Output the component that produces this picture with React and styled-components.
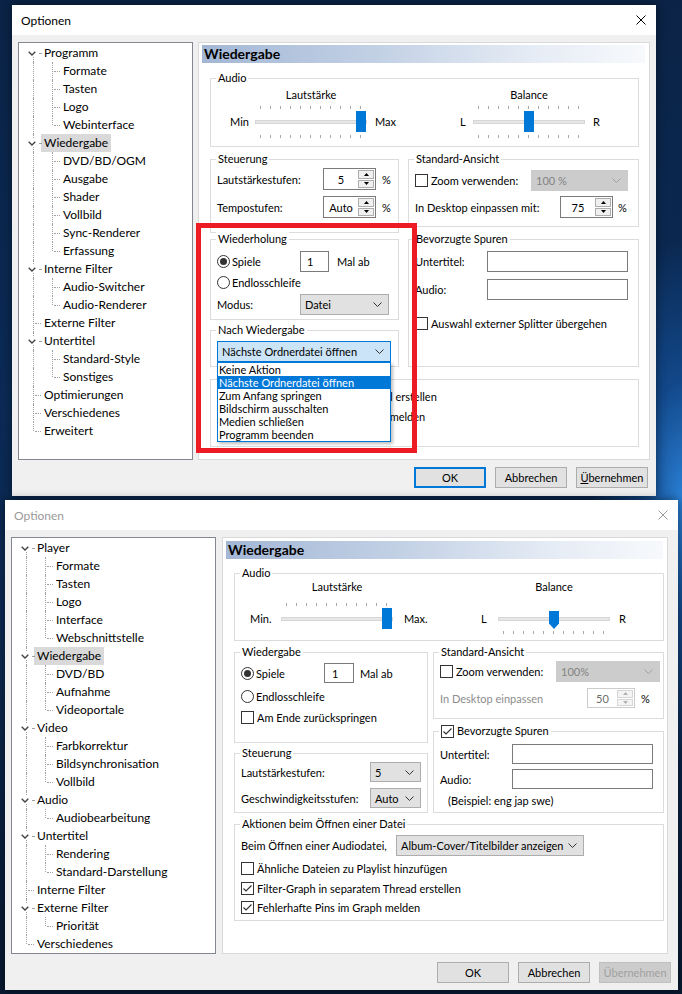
import React from 'react'
import styled, { createGlobalStyle } from 'styled-components'

const GlobalStyle = createGlobalStyle`
  html, body {
    margin: 0;
    padding: 0;
  }
  body {
    width: 682px;
    height: 994px;
    overflow: hidden;
    background:
      radial-gradient(ellipse 90px 260px at 100% 50%, #2a7fd4 0%, rgba(24, 96, 180, 0.55) 45%, rgba(0, 0, 0, 0) 100%),
      linear-gradient(180deg, #0b2346 0%, #0a2a55 40%, #0b2850 65%, #08182f 100%);
    font-family: Lato, "Noto Sans", sans-serif;
    font-size: 11px;
    color: #000;
  }
`

const Screen = styled.div`
  display: flex;
  flex-direction: column;
  padding-top: 5px;
`

const Dialog = styled.div`
  position: relative;
  flex: none;
  width: ${p => p.$w}px;
  height: ${p => p.$h}px;
  margin: ${p => p.$mt}px 0 0 ${p => p.$ml}px;
  background: #f0f0f0;
  display: flex;
  flex-direction: column;
  box-shadow: 0 0 9px rgba(0, 0, 0, 0.45);
`

const TitleBar = styled.div`
  flex: none;
  height: 30px;
  background: #fff;
  display: flex;
  align-items: center;
  justify-content: space-between;
  padding: 0 10px 0 9px;
  font-size: 12px;
  color: ${p => (p.$inactive ? '#9a9a9a' : '#000')};
`

const Main = styled.div`
  flex: none;
  display: flex;
  gap: ${p => p.$gap}px;
  height: ${p => p.$h}px;
  margin-top: 7px;
  padding: 0 ${p => p.$pr}px 0 6px;
`

const ButtonRow = styled.div`
  display: flex;
  justify-content: flex-end;
  gap: 9px;
  margin-top: ${p => p.$mt}px;
  padding-right: ${p => p.$pr}px;
`

const Button = styled.div`
  width: 72px;
  height: 21px;
  box-sizing: border-box;
  display: flex;
  align-items: center;
  justify-content: center;
  background: ${p => (p.$disabled ? '#cccccc' : '#e1e1e1')};
  border: ${p => (p.$default ? '2px solid #0078d7' : p.$disabled ? '1px solid #bfbfbf' : '1px solid #adadad')};
  color: ${p => (p.$disabled ? '#a0a0a0' : '#000')};
`

/* ---------- tree ---------- */

const TreeBox = styled.div`
  flex: none;
  width: ${p => p.$w}px;
  box-sizing: border-box;
  background: #fff;
  border: 1px solid #828790;
  padding: 1px 0 0 ${p => p.$pl}px;
  font-size: 12px;
`

const TreeRow = styled.div`
  display: flex;
  align-items: center;
  height: 18px;
`

const Guide = styled.span`
  position: relative;
  flex: none;
  width: 19px;
  height: 18px;
  &::before {
    content: '';
    display: ${p => (p.$up || p.$down ? 'block' : 'none')};
    position: absolute;
    left: 11px;
    top: ${p => (p.$up ? '0' : '9px')};
    bottom: ${p => (p.$down ? '0' : '9px')};
    border-left: 1px dotted #a0a0a0;
  }
  &::after {
    content: '';
    display: ${p => (p.$h ? 'block' : 'none')};
    position: absolute;
    left: ${p => (p.$exp ? 17 : 13)}px;
    right: 0;
    top: 9px;
    border-top: 1px dotted #a0a0a0;
  }
`

const Expander = styled.span`
  position: absolute;
  left: 5px;
  top: 5px;
  width: 9px;
  height: 8px;
  background: #fff;
  display: flex;
  align-items: center;
  justify-content: center;
  z-index: 1;
`

const NodeLabel = styled.span`
  height: 18px;
  line-height: 18px;
  padding: 0 3px;
  white-space: nowrap;
  background: ${p => (p.$sel ? '#d9d9d9' : 'transparent')};
`

/* ---------- page ---------- */

const Panel = styled.div`
  flex: none;
  width: ${p => p.$w}px;
  box-sizing: border-box;
  background: #fff;
  border: 1px solid #d9d9d9;
  padding: ${p => p.$pt}px 4px 0 3px;
`

const PageHeader = styled.div`
  height: 18px;
  line-height: 18px;
  padding-left: 2px;
  font-size: 14px;
  font-weight: 700;
  background: linear-gradient(to right, #a3b7d5 0%, #c3d1e5 40%, #e6ecf5 75%, #f7f9fc 100%);
`

const PageBody = styled.div`
  display: flex;
  flex-direction: column;
  width: ${p => p.$w}px;
  margin: ${p => p.$mt}px 0 0 ${p => p.$ml}px;
`

const Columns = styled.div`
  display: flex;
  align-items: flex-start;
  gap: ${p => p.$gap}px;
  margin-top: ${p => p.$mt}px;
`

const Column = styled.div`
  flex: none;
  width: ${p => p.$w}px;
  display: flex;
  flex-direction: column;
`

const Group = styled.div`
  flex: none;
  box-sizing: border-box;
  height: ${p => p.$h}px;
  margin-top: ${p => p.$mt || 0}px;
  border: 1px solid #dcdcdc;
  padding: 0 6px;
  display: flex;
  flex-direction: column;
`

const Legend = styled.div`
  align-self: flex-start;
  height: 14px;
  line-height: 14px;
  margin: -8px 0 0 -1px;
  padding: 0 2px;
  background: #fff;
  display: flex;
  align-items: center;
  gap: 3px;
  white-space: nowrap;
`

const Row = styled.div`
  flex: none;
  display: flex;
  align-items: center;
  height: ${p => p.$h}px;
  margin-top: ${p => p.$mt || 0}px;
  white-space: nowrap;
`

const Label = styled.span`
  flex: none;
  width: ${p => (p.$w ? `${p.$w}px` : 'auto')};
  margin-left: ${p => p.$ml || 0}px;
  color: ${p => (p.$disabled ? '#8d8d8d' : 'inherit')};
`

const Box = styled.span`
  flex: none;
  width: 13px;
  height: 13px;
  box-sizing: border-box;
  border: 1px solid #333;
  border-radius: ${p => (p.$round ? '50%' : '0')};
  background: #fff;
  display: flex;
  align-items: center;
  justify-content: center;
`

const Dot = styled.span`
  width: 7px;
  height: 7px;
  border-radius: 50%;
  background: #333;
`

const Choice = styled.span`
  flex: none;
  display: flex;
  align-items: center;
  gap: ${p => p.$gap ?? 3}px;
  width: ${p => (p.$w ? `${p.$w}px` : 'auto')};
`

const TextBox = styled.span`
  flex: none;
  box-sizing: border-box;
  width: ${p => p.$w}px;
  height: ${p => p.$h}px;
  border: 1px solid #7a7a7a;
  background: #fff;
  padding-left: ${p => p.$pl || 0}px;
  display: flex;
  align-items: center;
`

const comboLook = {
  normal: { bg: '#e1e1e1', border: '#adadad', color: '#000' },
  disabled: { bg: '#cccccc', border: '#cccccc', color: '#838383' },
  focus: { bg: '#cce4f7', border: '#0078d7', color: '#000' },
}

const ComboBox = styled.span`
  flex: none;
  box-sizing: border-box;
  width: ${p => p.$w}px;
  height: ${p => p.$h}px;
  padding: 0 6px 0 4px;
  display: flex;
  align-items: center;
  justify-content: space-between;
  background: ${p => comboLook[p.$look].bg};
  border: 1px solid ${p => comboLook[p.$look].border};
  color: ${p => comboLook[p.$look].color};
`

const ComboWrap = styled.div`
  position: relative;
  flex: none;
`

const DropList = styled.div`
  position: absolute;
  top: 100%;
  left: 0;
  width: 100%;
  box-sizing: border-box;
  background: #fff;
  border: 1px solid #0078d7;
  box-shadow: 2px 2px 3px rgba(0, 0, 0, 0.25);
  z-index: 5;
`

const DropItem = styled.div`
  height: 13px;
  line-height: 13px;
  padding-left: 1px;
  white-space: nowrap;
  background: ${p => (p.$sel ? '#0078d7' : 'transparent')};
  color: ${p => (p.$sel ? '#fff' : '#000')};
`

const SpinBox = styled.span`
  flex: none;
  box-sizing: border-box;
  width: ${p => p.$w}px;
  height: ${p => p.$h}px;
  display: flex;
  background: #fff;
  border: 1px solid ${p => (p.$disabled ? '#cccccc' : '#7a7a7a')};
  color: ${p => (p.$disabled ? '#6d6d6d' : '#000')};
`

const SpinValue = styled.span`
  flex: 1;
  display: flex;
  align-items: center;
  justify-content: center;
`

const SpinArrows = styled.span`
  flex: none;
  width: 16px;
  display: flex;
  flex-direction: column;
  gap: 1px;
  padding: 1px 1px 1px 0;
`

const SpinArrow = styled.span`
  flex: 1;
  display: flex;
  align-items: center;
  justify-content: center;
  box-sizing: border-box;
  background: ${p => (p.$disabled ? '#f4f4f4' : '#f0f0f0')};
  border: 1px solid ${p => (p.$disabled ? '#d6d6d6' : '#adadad')};
`

const Overlay = styled.div`
  position: absolute;
  left: ${p => p.$x}px;
  top: ${p => p.$y}px;
  width: ${p => p.$w}px;
  height: ${p => p.$h}px;
  box-sizing: border-box;
  border: 5px solid #ed1c24;
  z-index: 10;
  pointer-events: none;
`

/* ---------- slider ---------- */

const SliderRow = styled.div`
  display: flex;
  margin: ${p => p.$mt}px 0 0 ${p => p.$ml}px;
`

const SliderCol = styled.div`
  flex: none;
  display: flex;
  flex-direction: column;
`

const SliderCaption = styled.div`
  width: 112px;
  height: 14px;
  line-height: 14px;
  text-align: center;
  margin-left: ${p => p.$lead}px;
`

const TickRow = styled.div`
  display: flex;
  justify-content: space-between;
  width: 101px;
  height: 4px;
  margin: ${p => p.$mt}px 0 0 ${p => p.$lead + 5}px;
  visibility: ${p => (p.$hidden ? 'hidden' : 'visible')};
`

const Tick = styled.span`
  width: 1px;
  height: 3px;
  background: #a8a8a8;
`

const SliderLine = styled.div`
  display: flex;
  align-items: center;
  height: 21px;
  margin-top: ${p => p.$mt}px;
`

const EndLabel = styled.span`
  flex: none;
  box-sizing: border-box;
  width: ${p => (p.$w ? `${p.$w}px` : 'auto')};
  padding-left: ${p => p.$pl || 0}px;
`

const Track = styled.div`
  position: relative;
  flex: none;
  width: 112px;
  height: 21px;
  display: flex;
  align-items: center;
`

const Rail = styled.div`
  width: 100%;
  height: 4px;
  box-sizing: border-box;
  background: #e7e7e7;
  border: 1px solid #d6d6d6;
`

const Thumb = styled.div`
  position: absolute;
  top: ${p => (p.$pointed ? 3 : 0)}px;
  width: 10px;
  height: ${p => (p.$pointed ? 18 : 21)}px;
  background: #0078d7;
  clip-path: ${p => (p.$pointed ? 'polygon(0 0, 100% 0, 100% 70%, 50% 100%, 0 70%)' : 'none')};
`

/* ---------- small drawings ---------- */

const CloseIcon = ({ color }) => (
  <svg width="10" height="10" viewBox="0 0 10 10">
    <path d="M0.5 0.5 L9.5 9.5 M9.5 0.5 L0.5 9.5" stroke={color} strokeWidth="1" fill="none" />
  </svg>
)

const Chevron = ({ color = '#333', w = 9 }) => (
  <svg width={w} height="5" viewBox="0 0 9 5">
    <polyline points="0.5,0.5 4.5,4.5 8.5,0.5" stroke={color} strokeWidth="1" fill="none" />
  </svg>
)

const TreeChevron = () => (
  <svg width="8" height="5" viewBox="0 0 8 5">
    <polyline points="0.7,0.7 4,4 7.3,0.7" stroke="#404040" strokeWidth="1.3" fill="none" />
  </svg>
)

const Tri = ({ up, color }) => (
  <svg width="5" height="3" viewBox="0 0 5 3">
    <polygon points={up ? '0,3 5,3 2.5,0' : '0,0 5,0 2.5,3'} fill={color} />
  </svg>
)

const CheckMark = () => (
  <svg width="11" height="11" viewBox="0 0 11 11">
    <polyline points="1.5,5.5 4,8 9.5,2.5" stroke="#333" strokeWidth="1.2" fill="none" />
  </svg>
)

const CheckBox = ({ checked }) => <Box>{checked && <CheckMark />}</Box>
const Radio = ({ checked }) => <Box $round>{checked && <Dot />}</Box>

const Combo = ({ w, h = 21, look = 'normal', children }) => (
  <ComboBox $w={w} $h={h} $look={look}>
    <span>{children}</span>
    <Chevron color={look === 'disabled' ? '#a0a0a0' : '#333'} />
  </ComboBox>
)

const Spin = ({ w, h, value, disabled }) => (
  <SpinBox $w={w} $h={h} $disabled={disabled}>
    <SpinValue>{value}</SpinValue>
    <SpinArrows>
      <SpinArrow $disabled={disabled}><Tri up color={disabled ? '#b0b0b0' : '#000'} /></SpinArrow>
      <SpinArrow $disabled={disabled}><Tri color={disabled ? '#b0b0b0' : '#000'} /></SpinArrow>
    </SpinArrows>
  </SpinBox>
)

const Slider = ({ caption, min, max, lead, tail, tailPad, value, top, bottom, pointed, s }) => (
  <SliderCol>
    <SliderCaption $lead={lead} style={{ marginTop: s.cap }}>{caption}</SliderCaption>
    <TickRow $lead={lead} $mt={s.t1} $hidden={!top}>
      {Array.from({ length: 11 }, (_, i) => <Tick key={i} />)}
    </TickRow>
    <SliderLine $mt={s.sl}>
      <EndLabel $w={lead}>{min}</EndLabel>
      <Track>
        <Rail />
        <Thumb $pointed={pointed} style={{ left: Math.round(value * 100) + 1 }} />
      </Track>
      <EndLabel $w={tail} $pl={tailPad}>{max}</EndLabel>
    </SliderLine>
    <TickRow $lead={lead} $mt={s.t2} $hidden={!bottom}>
      {Array.from({ length: 11 }, (_, i) => <Tick key={i} />)}
    </TickRow>
  </SliderCol>
)

/* ---------- tree data ---------- */

const flattenTree = nodes => {
  const rows = []
  nodes.forEach((n, i) => {
    const first = i === 0
    const last = i === nodes.length - 1
    rows.push({
      key: n.label,
      label: n.label,
      sel: n.sel,
      guides: [{ up: !first, down: !last, h: true, exp: !!n.children }],
    })
    ;(n.children || []).forEach((c, j) => {
      const lastChild = j === n.children.length - 1
      rows.push({
        key: `${n.label}/${c}`,
        label: c,
        guides: [{ up: !last, down: !last }, { up: true, down: !lastChild, h: true }],
      })
    })
  })
  return rows
}

const topTree = flattenTree([
  { label: 'Programm', children: ['Formate', 'Tasten', 'Logo', 'Webinterface'] },
  { label: 'Wiedergabe', sel: true, children: ['DVD/BD/OGM', 'Ausgabe', 'Shader', 'Vollbild', 'Sync-Renderer', 'Erfassung'] },
  { label: 'Interne Filter', children: ['Audio-Switcher', 'Audio-Renderer'] },
  { label: 'Externe Filter' },
  { label: 'Untertitel', children: ['Standard-Style', 'Sonstiges'] },
  { label: 'Optimierungen' },
  { label: 'Verschiedenes' },
  { label: 'Erweitert' },
])

const bottomTree = flattenTree([
  { label: 'Player', children: ['Formate', 'Tasten', 'Logo', 'Interface', 'Webschnittstelle'] },
  { label: 'Wiedergabe', sel: true, children: ['DVD/BD', 'Aufnahme', 'Videoportale'] },
  { label: 'Video', children: ['Farbkorrektur', 'Bildsynchronisation', 'Vollbild'] },
  { label: 'Audio', children: ['Audiobearbeitung'] },
  { label: 'Untertitel', children: ['Rendering', 'Standard-Darstellung'] },
  { label: 'Interne Filter' },
  { label: 'Externe Filter', children: ['Priorität'] },
  { label: 'Verschiedenes' },
])

const Tree = ({ rows, w, pl }) => (
  <TreeBox $w={w} $pl={pl}>
    {rows.map(r => (
      <TreeRow key={r.key}>
        {r.guides.map((g, i) => (
          <Guide key={i} $up={g.up} $down={g.down} $h={g.h} $exp={g.exp}>
            {g.exp && <Expander><TreeChevron /></Expander>}
          </Guide>
        ))}
        <NodeLabel $sel={r.sel}>{r.label}</NodeLabel>
      </TreeRow>
    ))}
  </TreeBox>
)

const afterPlayback = [
  'Keine Aktion',
  'Nächste Ordnerdatei öffnen',
  'Zum Anfang springen',
  'Bildschirm ausschalten',
  'Medien schließen',
  'Programm beenden',
]

const topSpacing = { cap: 3, t1: 4, sl: 1, t2: 3 }
const bottomSpacing = { cap: 0, t1: 9, sl: 1, t2: 2 }

const TopPage = () => (
  <Panel $w={452} $pt={2}>
    <PageHeader>Wiedergabe</PageHeader>
    <PageBody $mt={15} $ml={8} $w={429}>
      <Group $h={69}>
        <Legend>Audio</Legend>
        <SliderRow $mt={0} $ml={13}>
          <Slider caption="Lautstärke" min="Min" max="Max" lead={25} tail={93} tailPad={8} value={1} top bottom s={topSpacing} />
          <Slider caption="Balance" min="L" max="R" lead={13} tailPad={8} value={0.5} top bottom s={topSpacing} />
        </SliderRow>
      </Group>
      <Columns $mt={12} $gap={9}>
        <Column $w={189}>
          <Group $h={74}>
            <Legend>Steuerung</Legend>
            <Row $h={22} $mt={2}>
              <Label $w={106}>Lautstärkestufen:</Label>
              <Spin w={53} h={22} value="5" />
              <Label $ml={6}>%</Label>
            </Row>
            <Row $h={22} $mt={6}>
              <Label $w={106}>Tempostufen:</Label>
              <Spin w={53} h={22} value="Auto" />
              <Label $ml={6}>%</Label>
            </Row>
          </Group>
          <Group $h={81} $mt={6}>
            <Legend>Wiederholung</Legend>
            <Row $h={21} $mt={5}>
              <Choice $w={83} $gap={2}><Radio checked />Spiele</Choice>
              <TextBox $w={29} $h={21} $pl={6}>1</TextBox>
              <Label $ml={8}>Mal ab</Label>
            </Row>
            <Row $h={18} $mt={1}>
              <Choice $gap={2}><Radio />Endlosschleife</Choice>
            </Row>
            <Row $h={21} $mt={3}>
              <Label $w={83}>Modus:</Label>
              <Combo w={89}>Datei</Combo>
            </Row>
          </Group>
          <Group $h={37} $mt={10}>
            <Legend>Nach Wiedergabe</Legend>
            <Row $h={21} $mt={4}>
              <ComboWrap>
                <Combo w={174} look="focus">Nächste Ordnerdatei öffnen</Combo>
                <DropList>
                  {afterPlayback.map((t, i) => (
                    <DropItem key={t} $sel={i === 1}>{t}</DropItem>
                  ))}
                </DropList>
              </ComboWrap>
            </Row>
          </Group>
        </Column>
        <Column $w={231}>
          <Group $h={68}>
            <Legend>Standard-Ansicht</Legend>
            <Row $h={21} $mt={4}>
              <Choice $w={116}><CheckBox />Zoom verwenden:</Choice>
              <Combo w={97} look="disabled">100 %</Combo>
            </Row>
            <Row $h={22} $mt={5}>
              <Label $w={145}>In Desktop einpassen mit:</Label>
              <Spin w={53} h={22} value="75" />
              <Label $ml={5}>%</Label>
            </Row>
          </Group>
          <Group $h={128} $mt={12}>
            <Legend>Bevorzugte Spuren</Legend>
            <Row $h={21} $mt={5}>
              <Label $w={72}>Untertitel:</Label>
              <TextBox $w={141} $h={21} />
            </Row>
            <Row $h={21} $mt={7}>
              <Label $w={72}>Audio:</Label>
              <TextBox $w={141} $h={21} />
            </Row>
            <Row $h={14} $mt={16}>
              <Choice><CheckBox />Auswahl externer Splitter übergehen</Choice>
            </Row>
          </Group>
        </Column>
      </Columns>
      <Group $h={68} $mt={12}>
        <Row $h={20} $mt={6}>
          <Choice><CheckBox checked />Filter-Graph in separatem Thread erstellen</Choice>
        </Row>
        <Row $h={20}>
          <Choice><CheckBox checked />Fehlerhafte Pins im Filter-Graph melden</Choice>
        </Row>
      </Group>
    </PageBody>
  </Panel>
)

const BottomPage = () => (
  <Panel $w={446} $pt={3}>
    <PageHeader>Wiedergabe</PageHeader>
    <PageBody $mt={14} $ml={8} $w={430}>
      <Group $h={68}>
        <Legend>Audio</Legend>
        <SliderRow $mt={0} $ml={9}>
          <Slider caption="Lautstärke" min="Min." max="Max." lead={31} tail={88} tailPad={11} value={1} top s={bottomSpacing} />
          <Slider caption="Balance" min="L" max="R" lead={17} tailPad={9} value={0.5} bottom pointed s={bottomSpacing} />
        </SliderRow>
      </Group>
      <Columns $mt={11} $gap={5}>
        <Column $w={194}>
          <Group $h={91}>
            <Legend>Wiedergabe</Legend>
            <Row $h={20} $mt={4}>
              <Choice $w={83} $gap={2}><Radio checked />Spiele</Choice>
              <TextBox $w={30} $h={20} $pl={7}>1</TextBox>
              <Label $ml={6}>Mal ab</Label>
            </Row>
            <Row $h={18} $mt={4}>
              <Choice $gap={2}><Radio />Endlosschleife</Choice>
            </Row>
            <Row $h={18} $mt={3}>
              <Choice><CheckBox />Am Ende zurückspringen</Choice>
            </Row>
          </Group>
          <Group $h={60} $mt={10}>
            <Legend>Steuerung</Legend>
            <Row $h={20} $mt={2}>
              <Label $w={129}>Lautstärkestufen:</Label>
              <Combo w={51} h={20}>5</Combo>
            </Row>
            <Row $h={20} $mt={6}>
              <Label $w={129}>Geschwindigkeitsstufen:</Label>
              <Combo w={51} h={20}>Auto</Combo>
            </Row>
          </Group>
        </Column>
        <Column $w={231}>
          <Group $h={67}>
            <Legend>Standard-Ansicht</Legend>
            <Row $h={21} $mt={2}>
              <Choice $w={116}><CheckBox />Zoom verwenden:</Choice>
              <Combo w={104} look="disabled">100%</Combo>
            </Row>
            <Row $h={20} $mt={6}>
              <Label $w={147} $disabled>In Desktop einpassen</Label>
              <Spin w={48} h={20} value="50" disabled />
              <Label $ml={6}>%</Label>
            </Row>
          </Group>
          <Group $h={82} $mt={12}>
            <Legend><CheckBox checked />Bevorzugte Spuren</Legend>
            <Row $h={20} $mt={6}>
              <Label $w={72}>Untertitel:</Label>
              <TextBox $w={141} $h={20} />
            </Row>
            <Row $h={20} $mt={5}>
              <Label $w={72}>Audio:</Label>
              <TextBox $w={141} $h={20} />
            </Row>
            <Row $h={14} $mt={4}>
              <Label $ml={8}>(Beispiel: eng jap swe)</Label>
            </Row>
          </Group>
        </Column>
      </Columns>
      <Group $h={97} $mt={11}>
        <Legend>Aktionen beim Öffnen einer Datei</Legend>
        <Row $h={21} $mt={4}>
          <Label $w={155}>Beim Öffnen einer Audiodatei,</Label>
          <Combo w={188}>Album-Cover/Titelbilder anzeigen</Combo>
        </Row>
        <Row $h={20} $mt={2}>
          <Choice><CheckBox />Ähnliche Dateien zu Playlist hinzufügen</Choice>
        </Row>
        <Row $h={20}>
          <Choice><CheckBox checked />Filter-Graph in separatem Thread erstellen</Choice>
        </Row>
        <Row $h={19}>
          <Choice><CheckBox checked />Fehlerhafte Pins im Graph melden</Choice>
        </Row>
      </Group>
    </PageBody>
  </Panel>
)

const App = () => (
  <Screen>
    <GlobalStyle />
    <Dialog $w={644} $h={491} $mt={0} $ml={12}>
      <TitleBar>
        <span>Optionen</span>
        <CloseIcon color="#000" />
      </TitleBar>
      <Main $h={418} $gap={5} $pr={6}>
        <Tree rows={topTree} w={175} pl={3} />
        <TopPage />
      </Main>
      <ButtonRow $mt={7} $pr={8}>
        <Button $default>OK</Button>
        <Button>Abbrechen</Button>
        <Button><span><u>Ü</u>bernehmen</span></Button>
      </ButtonRow>
      <Overlay $x={184} $y={218} $w={221} $h={230} />
    </Dialog>
    <Dialog $w={673} $h={490} $mt={4} $ml={5}>
      <TitleBar $inactive>
        <span>Optionen</span>
        <CloseIcon color="#9a9a9a" />
      </TitleBar>
      <Main $h={417} $gap={6} $pr={10}>
        <Tree rows={bottomTree} w={205} pl={3} />
        <BottomPage />
      </Main>
      <ButtonRow $mt={8} $pr={7}>
        <Button>OK</Button>
        <Button>Abbrechen</Button>
        <Button $disabled>Übernehmen</Button>
      </ButtonRow>
    </Dialog>
  </Screen>
)

export default App
